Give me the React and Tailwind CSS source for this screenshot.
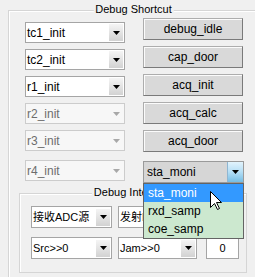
import React from "react";

function Arrow({ color = "#000" }) {
  return (
    <svg width="7" height="4" viewBox="0 0 7 4" className="block">
      <polygon points="0,0 7,0 3.5,4" fill={color} />
    </svg>
  );
}

function Combo({ text, w = "w-[100px]", disabled = false, h = "h-[21px]", extra = "" }) {
  return (
    <div
      className={`${w} ${h} ${extra} flex items-center border ${
        disabled ? "border-[#cccccc] bg-[#f7f7f7] text-[#6d6d6d]" : "border-[#a5a5a5] bg-white text-black"
      }`}
    >
      <span className="pl-[1px] flex-1 whitespace-nowrap overflow-hidden">{text}</span>
      <div
        className={`w-[14px] h-[17px] mr-[1px] flex items-center justify-center ${
          disabled ? "" : "bg-linear-to-b from-[#f5f5f5] to-[#d2d2d2]"
        }`}
      >
        <Arrow color={disabled ? "#a8a8a8" : "#000"} />
      </div>
    </div>
  );
}

function Btn({ text }) {
  return (
    <div className="w-[100px] h-[22px] flex items-center justify-center bg-[#d9d9d9] border border-[#adadad] border-r-[#7a7a7a] border-b-[#7a7a7a] shadow-[inset_1px_1px_0_#fbfbfb] text-black">
      {text}
    </div>
  );
}

function Field({ text = "" }) {
  return (
    <div className="w-[33px] h-[21px] flex items-center justify-center border border-[#a5a5a5] bg-white text-black">
      {text}
    </div>
  );
}

export default function App() {
  return (
    <div className="relative w-[255px] h-[277px] overflow-hidden bg-[#f0f0f0] text-[12px] leading-[14px] font-['Liberation_Sans','Noto_Sans_CJK_SC',sans-serif]">
      <div className="relative ml-[8px] mt-[10px] w-[251px] h-[300px] border border-[#d5d5d5] shadow-[inset_1px_1px_0_#ffffff] pt-[7px] pl-[10px]">
        <div className="absolute top-[-8px] left-1/2 -translate-x-1/2 px-[2px] bg-[#f0f0f0] text-[11px] leading-[13px] text-black whitespace-nowrap">
          Debug Shortcut
        </div>
        <div className="flex items-start gap-[18px] ml-[6px]">
          <div className="flex flex-col gap-[6px] mt-[4px]">
            <Combo text="tc1_init" />
            <Combo text="tc2_init" />
            <Combo text="r1_init" />
            <Combo text="r2_init" disabled />
            <Combo text="r3_init" disabled />
            <Combo text="r4_init" disabled extra="mt-[3px]" />
          </div>
          <div className="flex flex-col gap-[6px]">
            <Btn text="debug_idle" />
            <Btn text="cap_door" />
            <Btn text="acq_init" />
            <Btn text="acq_calc" />
            <Btn text="acq_door" />
            <div className="relative mt-[3px] w-[101px] h-[22px]">
              <div className="w-full h-full flex items-center border border-[#9a9a9a] bg-[#d6d6d6] text-black">
                <span className="pl-[3px] flex-1 whitespace-nowrap">sta_moni</span>
                <div className="w-[16px] h-[20px] border-l border-[#8fb6d2] bg-linear-to-b from-[#e2f3fc] via-[#b4def5] to-[#74bde4] flex items-center justify-center">
                  <Arrow />
                </div>
              </div>
              <div className="absolute left-0 top-full z-10 w-[101px] border border-[#646464] bg-[#cce8cf] text-black">
                <div className="h-[18px] flex items-center pl-[4px] bg-[#3399ff] text-white">sta_moni</div>
                <div className="h-[18px] flex items-center pl-[4px]">rxd_samp</div>
                <div className="h-[18px] flex items-center pl-[4px]">coe_samp</div>
              </div>
            </div>
          </div>
        </div>
        <div className="relative mt-[10px] w-[228px] h-[80px] border border-[#d5d5d5] shadow-[inset_1px_1px_0_#ffffff] pt-[12px] pl-[11px] text-[11px]">
          <div className="absolute top-[-8px] left-1/2 -translate-x-1/2 px-[2px] bg-[#f0f0f0] text-[11px] leading-[13px] text-black whitespace-nowrap">
            Debug Interface
          </div>
          <div className="flex flex-col gap-[9px]">
            <div className="flex items-center">
              <Combo text="接收ADC源" w="w-[81px]" h="h-[22px]" />
              <Combo text="发射DAC源" w="w-[79px]" h="h-[22px]" extra="ml-[6px]" />
              <div className="ml-[9px]">
                <Field />
              </div>
            </div>
            <div className="flex items-center">
              <Combo text="Src>>0" w="w-[81px]" h="h-[22px]" />
              <Combo text="Jam>>0" w="w-[79px]" h="h-[22px]" extra="ml-[6px]" />
              <div className="ml-[9px]">
                <Field text="0" />
              </div>
            </div>
          </div>
        </div>
      </div>
      <svg
        className="absolute left-[210px] top-[191px] z-20"
        width="13"
        height="20"
        viewBox="0 0 13 20"
      >
        <path
          d="M0.5 0.5 L0.5 16.5 L4.5 12.5 L7.5 18.5 L9.5 17.5 L6.5 11.5 L11.5 11.5 Z"
          fill="#ffffff"
          stroke="#000000"
          strokeWidth="1"
          strokeLinejoin="miter"
        />
      </svg>
    </div>
  );
}
